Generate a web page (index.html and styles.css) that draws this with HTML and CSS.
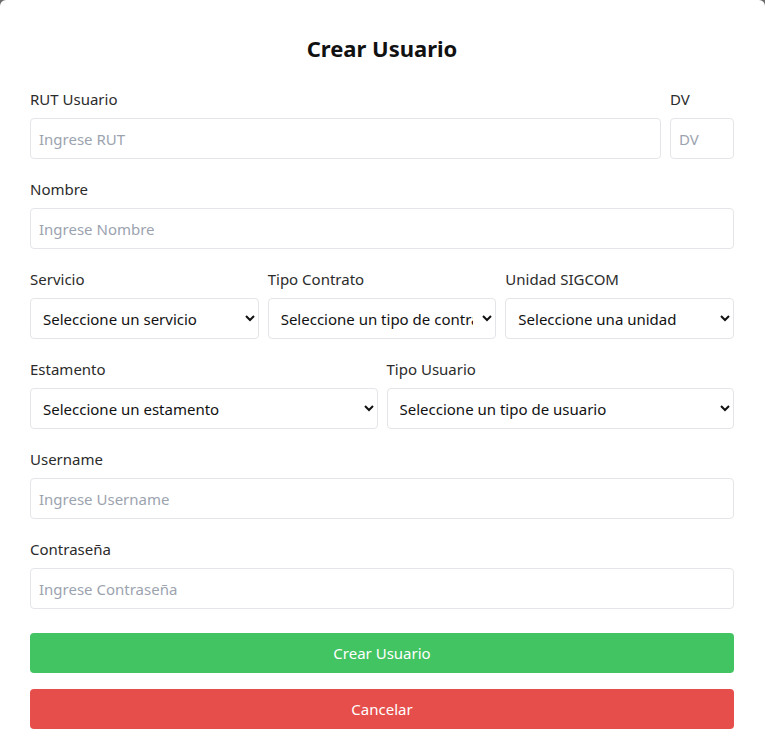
FILE: index.html
```html
<!DOCTYPE html>
<html lang="es">
<head>
<meta charset="utf-8">
<title>Crear Usuario</title>
<link rel="stylesheet" href="styles.css">
</head>
<body>
<div class="modal">
  <h2 class="title">Crear Usuario</h2>
  <form class="form">
    <div class="row">
      <div class="field grow">
        <label class="label">RUT Usuario</label>
        <input class="input" type="text" placeholder="Ingrese RUT">
      </div>
      <div class="field dv">
        <label class="label">DV</label>
        <input class="input" type="text" placeholder="DV">
      </div>
    </div>
    <div class="field">
      <label class="label">Nombre</label>
      <input class="input" type="text" placeholder="Ingrese Nombre">
    </div>
    <div class="row">
      <div class="field grow">
        <label class="label">Servicio</label>
        <select class="select"><option>Seleccione un servicio</option></select>
      </div>
      <div class="field grow">
        <label class="label">Tipo Contrato</label>
        <select class="select"><option>Seleccione un tipo de contrato</option></select>
      </div>
      <div class="field grow">
        <label class="label">Unidad SIGCOM</label>
        <select class="select"><option>Seleccione una unidad</option></select>
      </div>
    </div>
    <div class="row">
      <div class="field grow">
        <label class="label">Estamento</label>
        <select class="select"><option>Seleccione un estamento</option></select>
      </div>
      <div class="field grow">
        <label class="label">Tipo Usuario</label>
        <select class="select"><option>Seleccione un tipo de usuario</option></select>
      </div>
    </div>
    <div class="field">
      <label class="label">Username</label>
      <input class="input" type="text" placeholder="Ingrese Username">
    </div>
    <div class="field">
      <label class="label">Contraseña</label>
      <input class="input" type="password" placeholder="Ingrese Contraseña">
    </div>
    <div class="actions">
      <button type="button" class="btn btn-create">Crear Usuario</button>
      <button type="button" class="btn btn-cancel">Cancelar</button>
    </div>
  </form>
</div>
</body>
</html>
```
FILE: styles.css
```css
* { box-sizing: border-box; }
html, body {
  margin: 0;
  padding: 0;
  background: #6b6b6b;
  font-family: "Noto Sans", "Open Sans", sans-serif;
}
.modal {
  background: #ffffff;
  width: 765px;
  min-height: 756px;
  border-radius: 6px 6px 0 0;
  padding: 33px 31px 0 30px;
}
.title {
  margin: 0 0 24px 0;
  text-align: center;
  font-size: 22px;
  font-weight: 700;
  line-height: 30px;
  color: #111;
}
.form {
  display: flex;
  flex-direction: column;
}
.row {
  display: flex;
  gap: 9px;
}
.field {
  display: flex;
  flex-direction: column;
  margin-bottom: 18px;
}
.grow { flex: 1 1 0; min-width: 0; }
.dv { width: 64px; flex: none; }
.label {
  font-size: 15px;
  font-weight: 400;
  line-height: 24px;
  color: #2b2b2b;
  margin-bottom: 7px;
}
.input, .select {
  height: 41px;
  border: 1px solid #e3e5e8;
  border-radius: 4px;
  font-family: inherit;
  font-size: 15px;
  color: #111;
  background: #fff;
  width: 100%;
}
.input { padding: 0 8px; }
.input::placeholder { color: #9ca3af; }
.select { padding: 0 6px 0 8px; }
.actions {
  display: flex;
  flex-direction: column;
  gap: 16px;
  margin-top: 6px;
}
.btn {
  height: 40px;
  border: none;
  border-radius: 4px;
  color: #fff;
  font-family: inherit;
  font-size: 15px;
  width: 100%;
}
.btn-create { background: #42c462; }
.btn-cancel { background: #e54e4a; }
```
